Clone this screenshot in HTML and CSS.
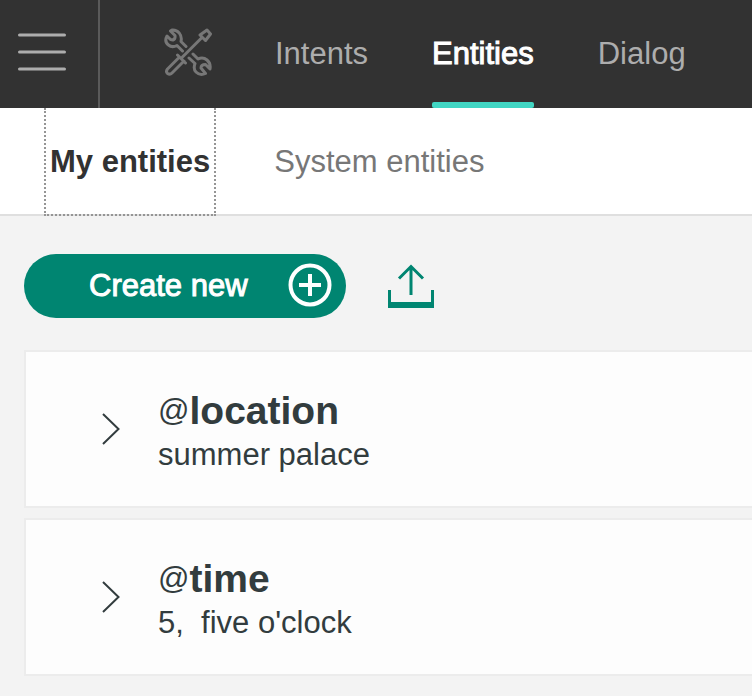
FILE: index.html
```html
<!DOCTYPE html>
<html lang="en">
<head>
<meta charset="utf-8">
<meta name="viewport" content="width=device-width, initial-scale=1">
<title>Entities</title>
<link rel="stylesheet" href="styles.css">
</head>
<body>
<header class="topbar">
  <button class="menu" type="button" aria-label="Menu">
    <svg width="48" height="38" viewBox="0 0 48 38" fill="none" stroke="#adadad" stroke-width="3" stroke-linecap="round"><path d="M1.500 2h45M1.500 19h45M1.500 36h45"/></svg>
  </button>
  <a class="tools" href="#" aria-label="Tools">
    <svg width="48" height="48" viewBox="0 0 48 48" fill="none" stroke="#777" stroke-width="3" stroke-linecap="round" stroke-linejoin="round">
      <path d="M22 18.500L17 13.500C18.500 7 14 1.500 8 2L6.500 3L11 7.500Q11.500 11 9 12L6.500 11.500L3 8Q0 13.500 4.500 17Q8 20 13 17.500L18.500 23"/>
      <path d="M29 26L34 31Q39 28.500 43 32Q47 35.500 46 41L41.500 36.500Q37 36.500 37 40L41.500 45.500Q36 48 32 44Q29 41 31 35.500L25 30"/>
      <path d="M37.500 10L18 29.500M13.500 27L21.500 35M15.500 29L3.500 41Q1.500 43.500 3.500 45.500Q6 47 8 45L20 33"/>
      <path d="M36 7L43 2L46.500 6L41.500 12.500Z"/>
    </svg>
  </a>
  <nav class="sections" aria-label="Workspace">
    <a class="section" href="#">Intents</a>
    <a class="section section-active" href="#" aria-current="page">Entities</a>
    <a class="section" href="#">Dialog</a>
  </nav>
</header>
<nav class="tabs" aria-label="Entities">
  <a class="tab tab-active" href="#" aria-current="page">My entities</a>
  <a class="tab" href="#">System entities</a>
</nav>
<main class="content">
  <div class="actions">
    <button class="create" type="button">
      <span class="create-label">Create new</span>
      <svg width="44" height="44" viewBox="0 0 44 44" fill="none" stroke="#fff" stroke-width="4"><circle cx="22" cy="22" r="19.500"/><path d="M22 11v22M11 22h22"/></svg>
    </button>
    <button class="upload" type="button" aria-label="Import">
      <svg width="46" height="44" viewBox="0 0 46 44" fill="#008571"><path d="M0 26H3V38H43V26H46V44H0Z"/><path d="M11 14.500L23 2.500L35 14.500M23 3V31" fill="none" stroke="#008571" stroke-width="3"/></svg>
    </button>
  </div>
  <ul class="entities">
    <li class="entity">
      <button class="expand" type="button" aria-label="Expand location">
        <svg width="18" height="32" viewBox="0 0 18 32" fill="none" stroke="#323c3e" stroke-width="2"><path d="M1 1L16.500 16L1 31"/></svg>
      </button>
      <div class="details">
        <h2 class="name"><span class="at">@</span>location</h2>
        <p class="values">summer palace</p>
      </div>
    </li>
    <li class="entity">
      <button class="expand" type="button" aria-label="Expand time">
        <svg width="18" height="32" viewBox="0 0 18 32" fill="none" stroke="#323c3e" stroke-width="2"><path d="M1 1L16.500 16L1 31"/></svg>
      </button>
      <div class="details">
        <h2 class="name"><span class="at">@</span>time</h2>
        <p class="values">5,  five o'clock</p>
      </div>
    </li>
  </ul>
</main>
</body>
</html>
```
FILE: styles.css
```css
* {
  box-sizing: border-box;
}

body {
  margin: 0;
  background: #f3f3f3;
  color: #323c3e;
  font: 31px/40px "Liberation Sans", Arial, sans-serif;
}

button {
  padding: 0;
  border: 0;
  background: none;
  color: inherit;
  font: inherit;
  cursor: pointer;
}

a {
  color: inherit;
  text-decoration: none;
}

svg {
  display: block;
  flex: none;
}

.topbar {
  display: flex;
  height: 108px;
  background: #323232;
  color: #adadad;
}

.menu {
  display: flex;
  align-items: center;
  padding: 0 32px 4px 18px;
  border-right: 2px solid #5a5a5a;
}

.tools {
  display: flex;
  align-items: center;
  padding: 0 63px 4px 64px;
}

.sections {
  display: flex;
  gap: 64px;
}

.section {
  display: flex;
  align-items: center;
  padding-top: 6px;
  border-bottom: 6px solid transparent;
}

.section-active {
  position: relative;
  color: #fff;
  -webkit-text-stroke: 1px #fff;
}

.section-active::after {
  content: "";
  position: absolute;
  right: 0;
  bottom: -6px;
  left: 0;
  height: 6px;
  border-radius: 2px;
  background: #41d6c3;
}

.tabs {
  display: flex;
  gap: 58px;
  height: 108px;
  padding-left: 44px;
  border-bottom: 2px solid #dfdfdf;
  background: #fff;
  color: #777;
}

.tab {
  display: flex;
  align-items: center;
  padding-top: 2px;
}

.tab-active {
  margin-bottom: -2px;
  padding: 2px 4px 0;
  border: 2px dotted #959595;
  border-top: 0;
  color: #323232;
  font-weight: bold;
}

.content {
  padding: 38px 0 20px 24px;
}

.actions {
  display: flex;
  align-items: center;
  gap: 42px;
  margin-bottom: 32px;
}

.create {
  display: flex;
  align-items: center;
  gap: 40px;
  height: 64px;
  padding: 0 14px 2px 65px;
  border-radius: 32px;
  background: #008571;
  color: #fff;
}

.create-label {
  padding-top: 2px;
  -webkit-text-stroke: 1px #fff;
}

.entities {
  display: grid;
  gap: 10px;
  margin: 0;
  padding: 0;
  list-style: none;
}

.entity {
  display: flex;
  align-items: center;
  min-height: 158px;
  padding-left: 76px;
  border: 2px solid #ececec;
  border-right: 0;
  background: #fdfdfd;
}

.expand {
  margin-right: 38px;
}

.details {
  padding-top: 4px;
}

.name {
  display: flex;
  align-items: center;
  margin: 0;
  font-size: 39px;
  line-height: 48px;
}

.at {
  font-size: 31px;
  font-weight: normal;
}

.values {
  margin: 0;
  white-space: pre-wrap;
}
```
